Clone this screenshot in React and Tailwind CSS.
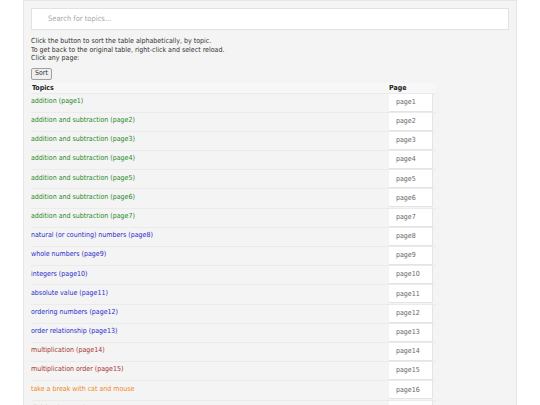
import React from 'react'

const topics = [
  { label: 'addition (page1)', color: 'text-[#1f8a1f]' },
  { label: 'addition and subtraction (page2)', color: 'text-[#1f8a1f]' },
  { label: 'addition and subtraction (page3)', color: 'text-[#1f8a1f]' },
  { label: 'addition and subtraction (page4)', color: 'text-[#1f8a1f]' },
  { label: 'addition and subtraction (page5)', color: 'text-[#1f8a1f]' },
  { label: 'addition and subtraction (page6)', color: 'text-[#1f8a1f]' },
  { label: 'addition and subtraction (page7)', color: 'text-[#1f8a1f]' },
  { label: 'natural (or counting) numbers (page8)', color: 'text-[#2a2acc]' },
  { label: 'whole numbers (page9)', color: 'text-[#2a2acc]' },
  { label: 'integers (page10)', color: 'text-[#2a2acc]' },
  { label: 'absolute value (page11)', color: 'text-[#2a2acc]' },
  { label: 'ordering numbers (page12)', color: 'text-[#2a2acc]' },
  { label: 'order relationship (page13)', color: 'text-[#2a2acc]' },
  { label: 'multiplication (page14)', color: 'text-[#a8332f]' },
  { label: 'multiplication order (page15)', color: 'text-[#a8332f]' },
  { label: 'take a break with cat and mouse', color: 'text-[#f08a1e]' },
  { label: 'division (page17)', color: 'text-[#a8332f]' },
]

const App = () => {
  return (
    <div className="h-[405px] overflow-hidden bg-white antialiased font-['DejaVu_Sans_Condensed','DejaVu_Sans',sans-serif]">
      <div className="mx-[23px] min-h-[420px] bg-[#f4f4f4] border border-[#e6e6e6] px-[7px] pt-[7px]">
        <div className="h-[22px] bg-white border border-[#e2e2e2] flex items-center pl-[16px] text-[7.5px] text-[#a8a8a8]">
          Search for topics...
        </div>

        <div className="mt-[7px] text-[7px] leading-[8.5px] text-[#333]">
          <div>Click the button to sort the table alphabetically, by topic.</div>
          <div>To get back to the original table, right-click and select reload.</div>
          <div>Click any page:</div>
        </div>

        <button className="block mt-[5px] h-[12px] px-[3px] bg-[#efefef] border border-[#a0a0a0] rounded-[2px] text-[7px] leading-none text-[#333]">
          Sort
        </button>

        <table className="mt-[3px] w-[405px] border-collapse text-[7px]">
          <thead>
            <tr className="h-[10px] bg-[#f7f7f7]">
              <th className="text-left font-bold text-[#222] p-0 pl-[1px] leading-[10px]">Topics</th>
              <th className="w-[48px] text-left font-bold text-[#222] p-0 pl-[1px] leading-[10px]">Page</th>
            </tr>
          </thead>
          <tbody>
            {topics.map((t, i) => (
              <tr key={i} className="h-[19.2px] border-t border-[#ebebeb]">
                <td className={`p-0 pb-[3px] ${t.color}`}>{t.label}</td>
                <td className="p-0 pl-[1px] align-top">
                  <div className="w-[44px] h-[18px] bg-white border-b border-r border-[#e4e4e4] flex items-center pl-[7px] text-[#666]">
                    page{i + 1}
                  </div>
                </td>
              </tr>
            ))}
          </tbody>
        </table>
      </div>
    </div>
  )
}

export default App
